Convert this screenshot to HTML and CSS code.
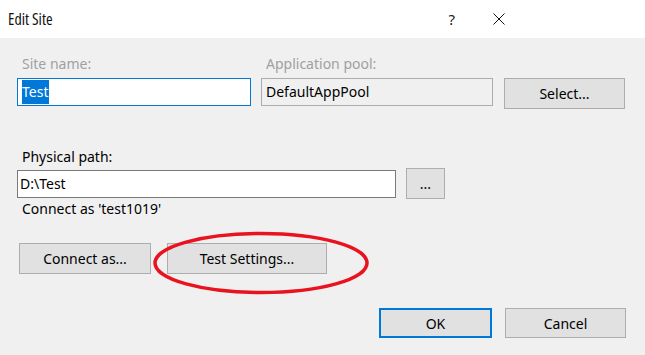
FILE: index.html
```html
<!DOCTYPE html>
<html lang="en">
<head>
  <meta charset="UTF-8">
  <title>Edit Site</title>
  <link rel="stylesheet" href="styles.css">
</head>
<body>
  <div class="dialog">
    <div class="titlebar">
      <span class="title">Edit Site</span>
      <span class="help">?</span>
      <svg class="close" width="12" height="12" viewBox="0 0 12 12">
        <path d="M0.5 0.5 L11.5 11.5 M11.5 0.5 L0.5 11.5" stroke="#111" stroke-width="1" fill="none"/>
      </svg>
    </div>

    <div class="content">
      <!-- site name / app pool -->
      <div class="row-top">
        <div class="field site">
          <label class="disabled">Site name:</label>
          <div class="input focus"><span class="sel">Test</span></div>
        </div>
        <div class="field pool">
          <label class="disabled">Application pool:</label>
          <div class="input readonly">DefaultAppPool</div>
        </div>
        <div class="field">
          <label>&nbsp;</label>
          <button class="btn select">Select...</button>
        </div>
      </div>

      <!-- physical path -->
      <label class="path-label">Physical path:</label>
      <div class="path-row">
        <div class="input path">D:\Test</div>
        <button class="btn browse">...</button>
      </div>
      <div class="connect-text">Connect as 'test1019'</div>

      <div class="action-row">
        <button class="btn connect">Connect as...</button>
        <button class="btn test">Test Settings...</button>
      </div>

      <div class="footer">
        <button class="btn ok">OK</button>
        <button class="btn cancel">Cancel</button>
      </div>
    </div>

    <!-- red highlight drawn on top of the screenshot -->
    <svg class="mark" width="222" height="66" viewBox="0 0 222 66">
      <ellipse cx="111" cy="33" rx="106" ry="29.5" stroke="#e8131f" stroke-width="3.5" fill="none"/>
    </svg>
  </div>
</body>
</html>
```

FILE: styles.css
```css
body {
  margin: 0;
  background-color: #f0f0f0;
  font-family: "Noto Sans", "Open Sans", sans-serif;
  font-size: 14px;
  color: #000;
}
.dialog {
  position: relative;
  width: 645px;
  height: 355px;
  overflow: hidden;
}
.titlebar {
  height: 38px;
  background-color: #fff;
  display: flex;
  align-items: center;
  padding-left: 8px;
}
.title {
  font-family: "Open Sans", "Noto Sans", sans-serif;
  font-stretch: 75%;
  font-size: 16px;
  flex: 1;
  padding-bottom: 1px;
  color: #111;
}
.help {
  font-size: 15px;
  margin-right: 38px;
  color: #222;
}
.close {
  margin-right: 140px;
}
.content {
  padding: 18px 0 0 17px;
}
label {
  display: block;
  height: 16px;
  line-height: 16px;
  padding-left: 5px;
}
label.disabled {
  color: #a0a0a0;
}
.row-top {
  display: flex;
}
.field label {
  margin-bottom: 6px;
}
.input {
  box-sizing: border-box;
  height: 28px;
  line-height: 25px;
  border: 1px solid #7a7a7a;
  background-color: #fff;
  padding-left: 2px;
  white-space: nowrap;
}
.site {
  width: 234px;
  margin-right: 10px;
}
.pool {
  width: 232px;
  margin-right: 11px;
}
.input.focus {
  border-color: #0078d7;
  padding-left: 4px;
}
.input.readonly {
  background-color: #f0f0f0;
  border-color: #acacac;
  padding-left: 4px;
}
.sel {
  background-color: #0078d7;
  color: #fff;
  padding: 2px 1px 3px 0;
}
.btn {
  box-sizing: border-box;
  font-family: inherit;
  font-size: 14px;
  color: #000;
  background-color: #e1e1e1;
  border: 1px solid #adadad;
  padding: 0;
  margin: 0;
  height: 31px;
}
.select {
  width: 121px;
}
.path-label {
  margin-top: 40px;
}
.path-row {
  display: flex;
  align-items: center;
  height: 31px;
  margin-top: 3px;
}
.path {
  width: 379px;
}
.browse {
  width: 39px;
  margin-left: 10px;
}
.connect-text {
  padding-left: 5px;
  height: 16px;
  line-height: 16px;
  margin-top: 2px;
}
.action-row {
  display: flex;
  margin-top: 26px;
  padding-left: 2px;
}
.connect {
  width: 132px;
}
.test {
  width: 160px;
  margin-left: 16px;
}
.footer {
  display: flex;
  margin-top: 34px;
  padding-left: 362px;
}
.footer .btn {
  height: 30px;
}
.ok {
  width: 113px;
  border: 2px solid #0078d7;
}
.cancel {
  width: 121px;
  margin-left: 13px;
}
.mark {
  position: absolute;
  left: 150px;
  top: 230px;
}
```
